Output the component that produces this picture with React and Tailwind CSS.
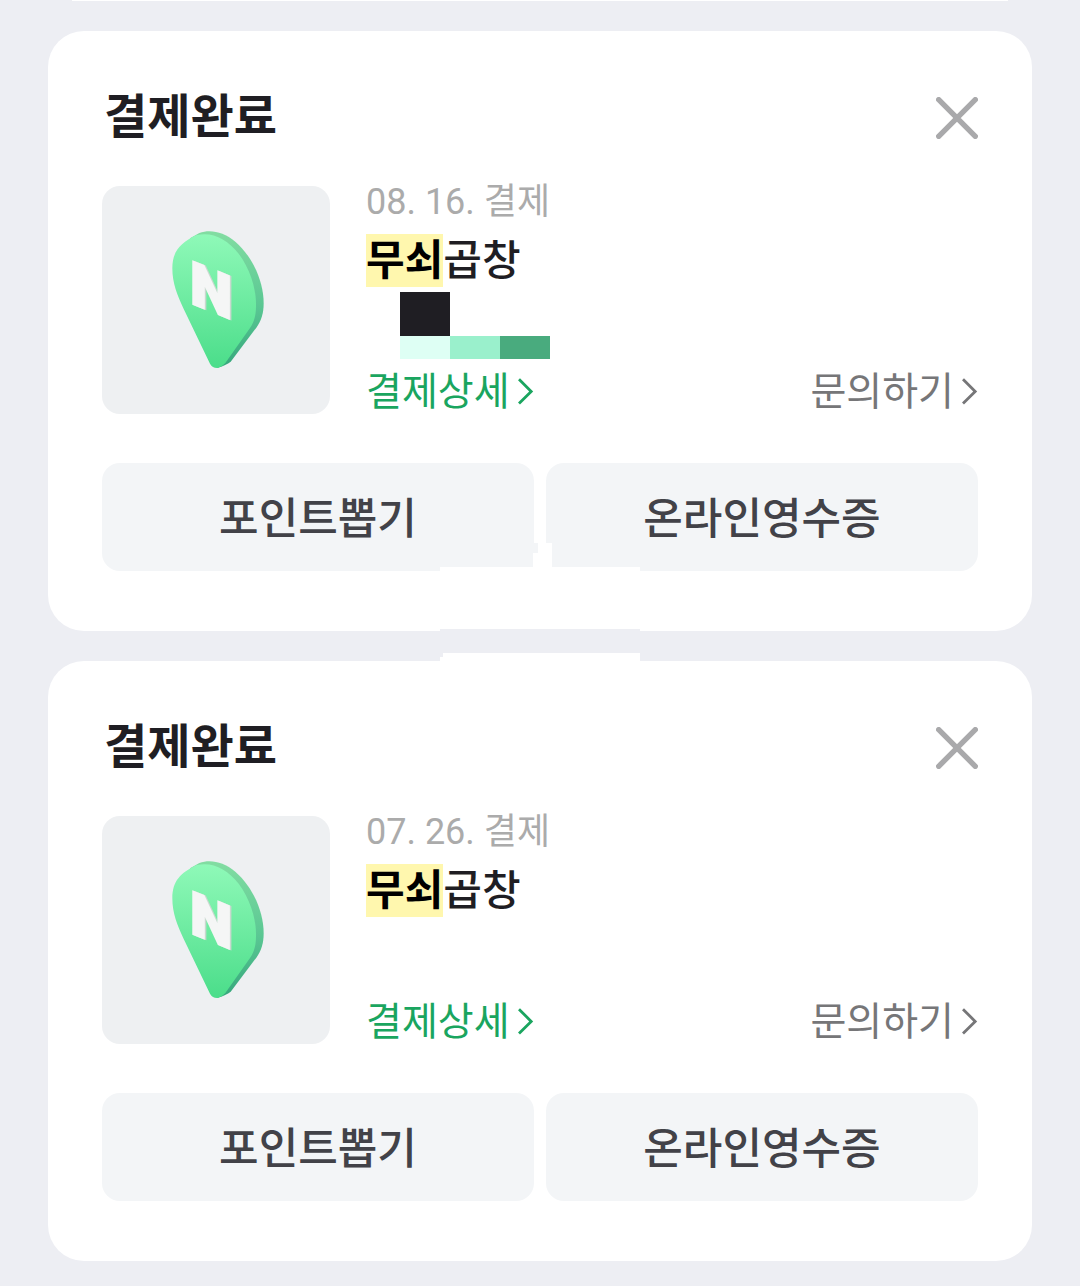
import React, { useState } from "react";

const payments = [
  { id: 1, date: "08. 16.", masked: true },
  { id: 2, date: "07. 26.", masked: false },
];

function CloseIcon() {
  return (
    <svg className="h-[42px] w-[42px]" viewBox="0 0 42 42" fill="none" stroke="#a9a9ab" strokeWidth="5.4" strokeLinecap="round" aria-hidden="true">
      <path d="M2.7 2.7 39.3 39.3M39.3 2.7 2.7 39.3" />
    </svg>
  );
}

function Chevron() {
  return (
    <svg className="h-7 w-4" viewBox="0 0 16 28" fill="none" stroke="currentColor" strokeWidth="2.8" aria-hidden="true">
      <path d="M1 1.2 13.2 13.4 1 25.6" />
    </svg>
  );
}

function PinLogo() {
  return (
    <svg className="h-full w-full" viewBox="36 33 684 684" role="img" aria-label="N">
      <defs>
        <linearGradient id="pinFace" x1="0" y1="0" x2="0" y2="1">
          <stop offset="0" stopColor="#8ff9b8" />
          <stop offset="1" stopColor="#4bdd8a" />
        </linearGradient>
        <linearGradient id="pinSide" x1="0" y1="0" x2="0" y2="1">
          <stop offset="0" stopColor="#82dda2" />
          <stop offset="0.55" stopColor="#5ac793" />
          <stop offset="1" stopColor="#36a77c" />
        </linearGradient>
      </defs>
      <path
        d="M300 190 L328 174 C362 162 400 171 436 200 C488 245 521 320 521 385 C521 415 514 437 499 458 L422 560 Q408 571 384 578 Z"
        fill="url(#pinSide)"
      />
      <path
        d="M247 280 C247 228 272 204 318 181 C364 168 412 192 446 236 C480 282 499 340 498 392 C498 420 493 440 480 459 L406 564 Q396 576 383 579 Q368 580 360 566 L280 400 C262 360 247 325 247 280 Z"
        fill="url(#pinFace)"
      />
      <g fontFamily="Roboto, sans-serif" fontWeight="900" fontSize="178" strokeWidth="7">
        <text transform="translate(305 385) skewY(22)" fill="#c9d8cf" stroke="#c9d8cf">N</text>
        <text transform="translate(301 383) skewY(22)" fill="#f5f6f6" stroke="#f5f6f6">N</text>
      </g>
    </svg>
  );
}

function MaskedLine() {
  return (
    <div className="mt-[5px] ml-[34px] w-[150px]" aria-hidden="true">
      <div className="h-11 w-[50px] bg-[#1f1e23]" />
      <div className="grid h-[23px] grid-cols-3">
        <span className="bg-[#defff4]" />
        <span className="bg-[#9af0cc]" />
        <span className="bg-[#49ab7e]" />
      </div>
    </div>
  );
}

// Blanked-out area lying over the foot of a card and the gap under it
function ErasedPatch() {
  return (
    <div className="pointer-events-none absolute -bottom-[30px] left-1/2 h-[118px] w-[200px] -translate-x-1/2" aria-hidden="true">
      <div className="absolute top-0 left-[94px] h-[10px] w-[18px] bg-white" />
      <div className="absolute top-0 left-[80px] h-6 w-[13px] bg-[#f3f5f7]" />
      <div className="absolute top-0 left-[93px] h-[10px] w-[5px] bg-[#f3f5f7]" />
      <div className="absolute top-[10px] left-[93px] h-[14px] w-[19px] bg-white" />
      <div className="absolute top-[10px] left-[112px] h-[14px] w-3 bg-[#f3f5f7]" />
      <div className="absolute top-6 left-0 h-[62px] w-full bg-white" />
      <div className="absolute top-[86px] left-0 h-6 w-full bg-[#edeef3]" />
      <div className="absolute top-[110px] right-0 h-2 w-[197px] bg-white" />
      <div className="absolute bottom-0 left-0 h-1 w-[3px] bg-white" />
    </div>
  );
}

function PaymentCard({ payment, onClose }) {
  return (
    <article className="relative rounded-[36px] bg-white px-[54px] pt-[54px] pb-[60px]">
      <header className="flex h-[66px] items-center justify-between">
        <h2 className="self-start pl-0.5 text-[47px] leading-[64px] font-bold text-[#1f1e23]">결제완료</h2>
        <button type="button" onClick={onClose} aria-label="닫기" className="cursor-pointer">
          <CloseIcon />
        </button>
      </header>

      {/* Payment summary */}
      <div className="mt-[35px] flex gap-9">
        <div className="h-[228px] w-[228px] shrink-0 overflow-hidden rounded-[18px] bg-[#eef0f2]">
          <PinLogo />
        </div>

        <div className="flex min-w-0 flex-1 flex-col">
          <p className="text-[36px] leading-8 text-[#ababab]">{payment.date} 결제</p>
          <h3 className="mt-4 flex text-[42px] leading-[53px] font-medium text-[#1f1e23]">
            <mark className="bg-[#fff7ae] font-bold text-black">무쇠</mark>곱창
          </h3>
          {payment.masked && <MaskedLine />}

          <div className="mt-auto flex items-center justify-between text-[39px] leading-[44px]">
            <a href="#detail" className="flex items-center gap-2 text-[#1aa55f]">
              결제상세
              <Chevron />
            </a>
            <a href="#inquiry" className="flex items-center gap-2 text-[#767678]">
              문의하기
              <Chevron />
            </a>
          </div>
        </div>
      </div>

      {/* Actions */}
      <div className="mt-[49px] grid grid-cols-2 gap-3 text-[43px] font-medium text-[#424248]">
        <button type="button" className="h-[108px] cursor-pointer rounded-[18px] bg-[#f3f5f7] pt-1">
          포인트뽑기
        </button>
        <button type="button" className="h-[108px] cursor-pointer rounded-[18px] bg-[#f3f5f7] pt-1">
          온라인영수증
        </button>
      </div>

      {payment.masked && <ErasedPatch />}
    </article>
  );
}

export default function App() {
  const [items, setItems] = useState(payments);

  const closeCard = (id) => setItems(items.filter((item) => item.id !== id));

  return (
    <main className="min-h-screen bg-[#edeef3] px-12 pb-6 font-[Roboto,'Noto_Sans_CJK_KR',sans-serif]" lang="ko">
      <div className="mx-6 h-px bg-white" />
      <div className="mt-[30px] flex flex-col gap-[30px]">
        {items.map((item) => (
          <PaymentCard key={item.id} payment={item} onClose={() => closeCard(item.id)} />
        ))}
      </div>
    </main>
  );
}
